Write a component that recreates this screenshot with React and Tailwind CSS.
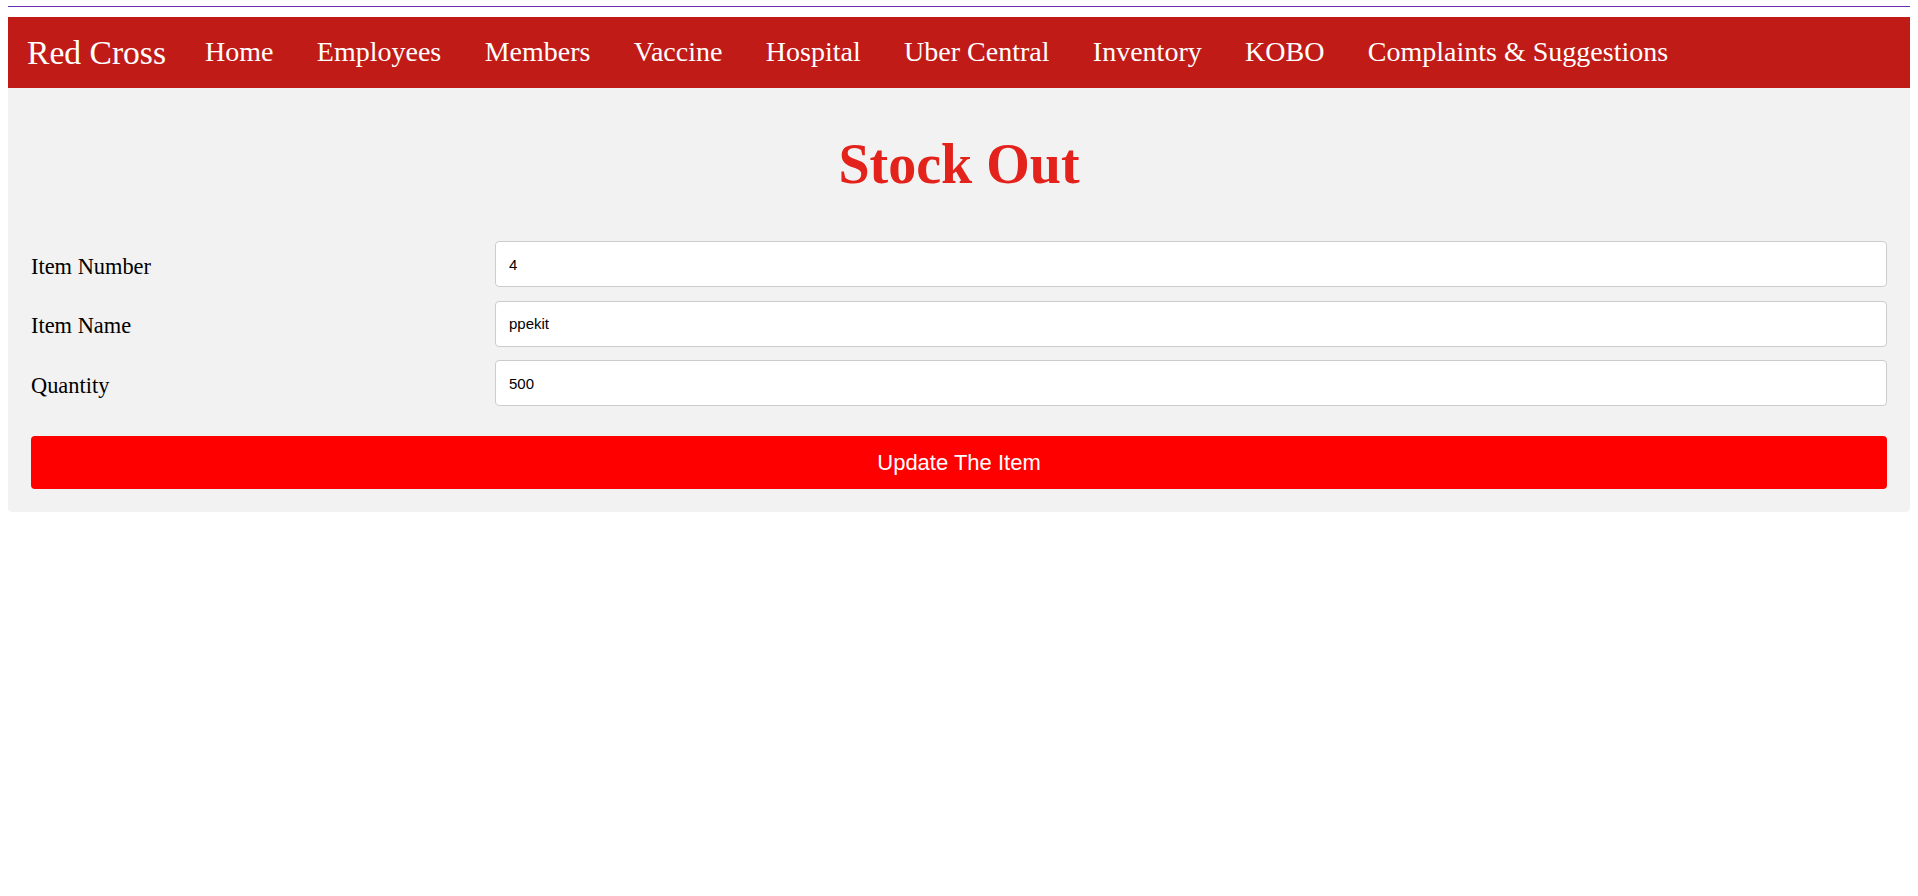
import React from 'react'

const links = ['Home', 'Employees', 'Members', 'Vaccine', 'Hospital', 'Uber Central', 'Inventory', 'KOBO', 'Complaints & Suggestions']

const fields = [
  { label: 'Item Number', value: '4' },
  { label: 'Item Name', value: 'ppekit' },
  { label: 'Quantity', value: '500' },
]

export default function App() {
  return (
    <div className="min-h-screen bg-white px-2 pt-[6px] font-['Liberation_Serif',serif]">
      <div className="h-px bg-[#6a2fb0]" />

      <nav className="mt-[10px] h-[71px] bg-[#c11b17] flex items-center pl-[19px] text-white">
        <a className="text-[33.6px] leading-none mr-[39px] whitespace-nowrap">Red Cross</a>
        <ul className="flex items-center gap-[43.4px]">
          {links.map((l) => (
            <li key={l}>
              <a className="text-[28px] leading-none whitespace-nowrap">{l}</a>
            </li>
          ))}
        </ul>
      </nav>

      <div className="bg-[#f2f2f2] rounded-b-[4px] px-[23px] pt-[48px] pb-[23px]">
        <h1 className="text-center text-[56px] font-bold leading-none text-[#e3221b]">Stock Out</h1>

        <div className="mt-[49px] flex flex-col gap-[13.5px]">
          {fields.map((f) => (
            <div key={f.label} className="flex items-center">
              <label className="w-1/4 pt-[5px] text-[22.4px] text-black">{f.label}</label>
              <input
                className="w-3/4 h-[46px] bg-white border border-[#cccccc] rounded-[4px] px-[13px] text-[15px] text-black font-['Liberation_Sans',Arial,sans-serif] outline-none"
                defaultValue={f.value}
              />
            </div>
          ))}
        </div>

        <button className="mt-[30px] w-full h-[53px] bg-[#ff0000] rounded-[4px] text-white text-[22px] font-['Liberation_Sans',Arial,sans-serif] flex items-center justify-center">
          Update The Item
        </button>
      </div>
    </div>
  )
}
